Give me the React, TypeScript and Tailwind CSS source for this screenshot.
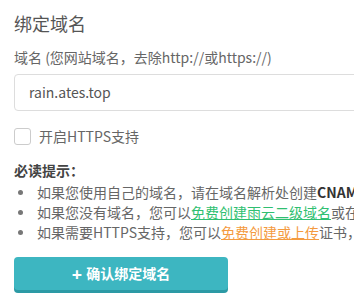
import React from "react";

const font = {
  fontFamily: '"Noto Sans", "Noto Sans CJK SC", sans-serif',
};

function Bullet({ children }: { children: React.ReactNode }) {
  return (
    <li className="flex h-[20px] items-center">
      <span className="ml-[4px] mr-[14px] inline-block h-[5px] w-[5px] shrink-0 rounded-full bg-[#777]" />
      <span>{children}</span>
    </li>
  );
}

export default function App() {
  return (
    <main
      className="h-[301px] w-[354px] overflow-hidden whitespace-nowrap bg-white px-[14px] pt-[11px]"
      style={{ fontFamily: '"Noto Sans CJK SC", "Noto Sans", sans-serif' }}
    >
      <h2 className="text-[18px] leading-[24px] text-[#555]">绑定域名</h2>

      <p className="mt-[12px] text-[14px] leading-[20px] text-[#666]">
        域名 (您网站域名，去除http://或https://)
      </p>

      <div className="mt-[7px] flex h-[37px] w-[400px] items-center rounded-[4px] border border-[#ddd] bg-white pl-[14px] text-[14px] text-[#555]">
        rain.ates.top
      </div>

      <label className="mt-[15px] flex h-[20px] items-center text-[14px] text-[#666]">
        <span className="mr-[8px] inline-block h-[17px] w-[17px] rounded-[3px] border border-[#ccc] bg-white" />
        开启HTTPS支持
      </label>

      <p className="mt-[14px] text-[14px] font-bold leading-[20px] text-[#444]">
        必读提示：
      </p>

      <ul className="mt-[2px] text-[14px] text-[#666]">
        <Bullet>
          如果您使用自己的域名，请在域名解析处创建
          <b className="text-[#333]">CNAME</b>记录
        </Bullet>
        <Bullet>
          如果您没有域名，您可以
          <a className="text-[#2fbf71] underline">免费创建雨云二级域名</a>
          或在其他地方注册
        </Bullet>
        <Bullet>
          如果需要HTTPS支持，您可以
          <a className="text-[#f49b3f] underline">免费创建或上传</a>
          证书，
        </Bullet>
      </ul>

      <button
        className="mt-[15px] flex h-[33px] w-[214px] items-center justify-center gap-[4px] rounded-[4px] bg-[#3db6c1] text-[14px] font-bold text-white shadow-[0_3px_0_#2c9aa5]"
        style={font}
      >
        <span className="text-[18px] leading-none">+</span>
        <span style={{ fontFamily: '"Noto Sans CJK SC", sans-serif' }}>
          确认绑定域名
        </span>
      </button>
    </main>
  );
}
